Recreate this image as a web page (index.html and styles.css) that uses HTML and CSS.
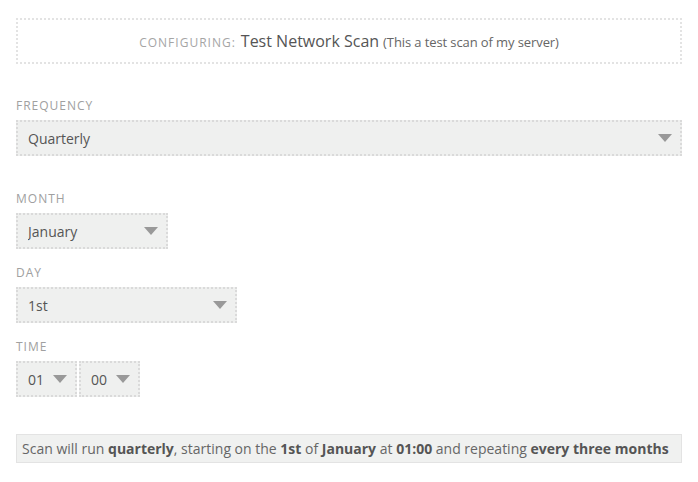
FILE: index.html
```html
<!DOCTYPE html>
<html>
<head>
    <meta charset="utf-8">
    <title>Schedule Scan</title>
    <link rel="stylesheet" href="styles.css">
</head>
<body>
    <div class="scan-config">

        <!-- Header -->
        <div class="config-title">
            <span class="config-label">Configuring:</span>
            <span class="scan-name">Test Network Scan</span>
            <span class="scan-desc">(This a test scan of my server)</span>
        </div>

        <div class="field field-frequency">
            <label for="frequency">Frequency</label>
            <div class="select-box select-full">
                <select id="frequency">
                    <option>Quarterly</option>
                </select>
                <svg class="arrow" width="14" height="8" viewBox="0 0 14 8"><path d="M0 0h14L7 8z"/></svg>
            </div>
        </div>

        <div class="field">
            <label for="month">Month</label>
            <div class="select-box select-month">
                <select id="month">
                    <option>January</option>
                </select>
                <svg class="arrow" width="14" height="8" viewBox="0 0 14 8"><path d="M0 0h14L7 8z"/></svg>
            </div>
        </div>

        <div class="field">
            <label for="day">Day</label>
            <div class="select-box select-day">
                <select id="day">
                    <option>1st</option>
                </select>
                <svg class="arrow" width="14" height="8" viewBox="0 0 14 8"><path d="M0 0h14L7 8z"/></svg>
            </div>
        </div>

        <div class="field">
            <label for="hour">Time</label>
            <div class="time-row">
                <div class="select-box select-time">
                    <select id="hour">
                        <option>01</option>
                    </select>
                    <svg class="arrow" width="14" height="8" viewBox="0 0 14 8"><path d="M0 0h14L7 8z"/></svg>
                </div>
                <div class="select-box select-time">
                    <select id="minute">
                        <option>00</option>
                    </select>
                    <svg class="arrow" width="14" height="8" viewBox="0 0 14 8"><path d="M0 0h14L7 8z"/></svg>
                </div>
            </div>
        </div>

        <!-- Summary -->
        <div class="summary">
            Scan will run <b>quarterly</b>, starting on the <b>1st</b> of <b>January</b> at <b>01:00</b> and repeating <b>every three months</b>
        </div>
    </div>
</body>
</html>
```

FILE: styles.css
```css
body {
    background-color: #fff;
    font-family: 'Open Sans', sans-serif;
    color: #555;
    margin: 0;
    padding: 0;
}
.scan-config {
    width: 666px;
    padding: 18px 16px;
}
.config-title {
    height: 42px;
    border: 2px dotted #e3e3e3;
    display: flex;
    align-items: center;
    justify-content: center;
    gap: 5px;
    margin-bottom: 34px;
}
.config-label {
    text-transform: uppercase;
    font-size: 12px;
    letter-spacing: 1px;
    color: #a5a5a5;
    padding-top: 2px;
}
.scan-name {
    font-size: 16px;
    color: #555;
}
.scan-desc {
    font-size: 13px;
    color: #666;
    letter-spacing: -0.1px;
    padding-top: 2px;
    margin-left: -1px;
}
.field {
    margin-bottom: 16px;
}
.field-frequency {
    margin-bottom: 35px;
}
label {
    display: block;
    text-transform: uppercase;
    font-size: 12px;
    line-height: 16px;
    letter-spacing: 1px;
    color: #a0a0a0;
    margin-bottom: 6px;
}
.select-box {
    position: relative;
    height: 32px;
    border: 2px dotted #dadada;
    background-color: #eff0ef;
}
.select-box select {
    appearance: none;
    -webkit-appearance: none;
    width: 100%;
    height: 100%;
    border: none;
    background: transparent;
    font-family: 'Open Sans', sans-serif;
    font-size: 14px;
    color: #555;
    padding: 0 0 0 10px;
    margin: 0;
    outline: none;
}
.select-box .arrow {
    position: absolute;
    right: 8px;
    top: 12px;
    fill: #999;
    pointer-events: none;
}
.select-full {
    width: 662px;
}
.select-month {
    width: 148px;
}
.select-day {
    width: 217px;
}
.time-row {
    display: flex;
    gap: 2px;
}
.select-time {
    width: 57px;
}
.summary {
    margin-top: 37px;
    border: 1px solid #e3e3e3;
    background-color: #f0f1f0;
    padding: 4px 5px;
    font-size: 14px;
    line-height: 19px;
    color: #666;
    white-space: nowrap;
}
.summary b {
    color: #555;
}
```
